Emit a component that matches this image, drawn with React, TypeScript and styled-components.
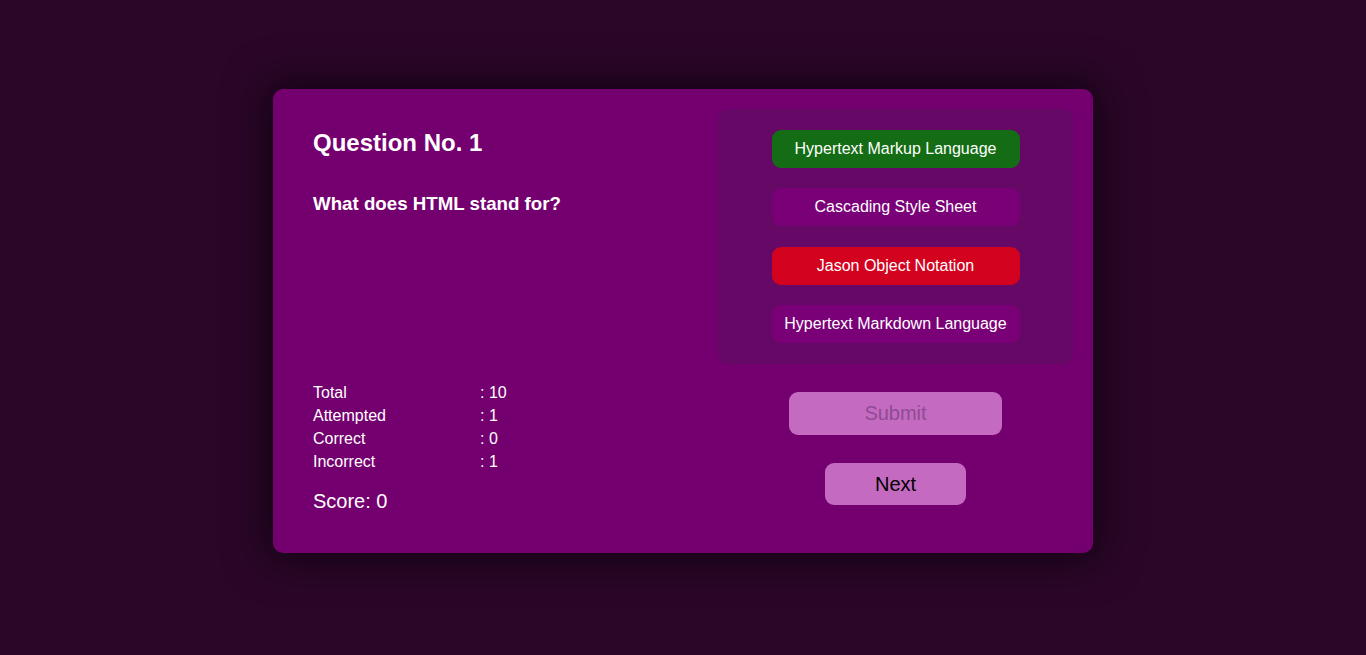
import React from "react";
import styled, { createGlobalStyle } from "styled-components";

const Global = createGlobalStyle`
  html, body { margin: 0; padding: 0; }
  body {
    background: #2b0629;
    font-family: "Liberation Sans", Arial, sans-serif;
    color: #ffffff;
  }
`;

const Page = styled.div`
  height: 655px;
  box-sizing: border-box;
  padding-top: 89px;
  display: flex;
  align-items: flex-start;
  justify-content: center;
`;

const Card = styled.div`
  width: 820px;
  height: 464px;
  box-sizing: border-box;
  padding: 20px;
  background: #740070;
  border-radius: 10px;
  box-shadow: 0 0 40px 8px rgba(0, 0, 0, 0.55);
  display: grid;
  grid-template-columns: 1fr 355px;
`;

const LeftCol = styled.div`
  padding: 20px;
  display: flex;
  flex-direction: column;
  justify-content: space-between;
`;

const Heading = styled.h2`
  margin: 0 0 36px;
  font-size: 24px;
  font-weight: 700;
`;

const QuestionText = styled.h3`
  margin: 0;
  font-size: 18.72px;
  font-weight: 700;
`;

const Stats = styled.div`
  display: grid;
  grid-template-columns: 167px auto;
  font-size: 16px;
  line-height: 23px;
`;

const Score = styled.div`
  margin-top: 17px;
  font-size: 20px;
`;

const RightCol = styled.div`
  display: flex;
  flex-direction: column;
`;

const Options = styled.div`
  height: 255px;
  background: #650866;
  border-radius: 10px;
  display: flex;
  flex-direction: column;
  align-items: center;
  justify-content: space-evenly;
`;

const Option = styled.button<{ $state: "correct" | "wrong" | "idle" }>`
  width: 248px;
  height: 38px;
  border: none;
  border-radius: 9px;
  font-family: "Liberation Sans", Arial, sans-serif;
  font-size: 16px;
  color: #ffffff;
  background: ${(p) =>
    p.$state === "correct" ? "#146d14" : p.$state === "wrong" ? "#d3021f" : "#7a0078"};
  cursor: pointer;
`;

const Actions = styled.div`
  flex: 1;
  display: flex;
  flex-direction: column;
  align-items: center;
  justify-content: space-evenly;
`;

const ActionButton = styled.button<{ $w: number; $h: number; $disabled?: boolean }>`
  width: ${(p) => p.$w}px;
  height: ${(p) => p.$h}px;
  border: none;
  border-radius: 9px;
  background: #c56ac1;
  font-family: "Liberation Sans", Arial, sans-serif;
  font-size: 20px;
  color: ${(p) => (p.$disabled ? "#8d4c93" : "#000000")};
`;

export default function App() {
  const stats: [string, string][] = [
    ["Total", ": 10"],
    ["Attempted", ": 1"],
    ["Correct", ": 0"],
    ["Incorrect", ": 1"],
  ];
  const options: { text: string; state: "correct" | "wrong" | "idle" }[] = [
    { text: "Hypertext Markup Language", state: "correct" },
    { text: "Cascading Style Sheet", state: "idle" },
    { text: "Jason Object Notation", state: "wrong" },
    { text: "Hypertext Markdown Language", state: "idle" },
  ];
  return (
    <>
      <Global />
      <Page>
        <Card>
          <LeftCol>
            <div>
              <Heading>Question No. 1</Heading>
              <QuestionText>What does HTML stand for?</QuestionText>
            </div>
            <div>
              <Stats>
                {stats.map(([k, v]) => (
                  <React.Fragment key={k}>
                    <span>{k}</span>
                    <span>{v}</span>
                  </React.Fragment>
                ))}
              </Stats>
              <Score>Score: 0</Score>
            </div>
          </LeftCol>
          <RightCol>
            <Options>
              {options.map((o) => (
                <Option key={o.text} $state={o.state}>
                  {o.text}
                </Option>
              ))}
            </Options>
            <Actions>
              <ActionButton $w={213} $h={43} $disabled>
                Submit
              </ActionButton>
              <ActionButton $w={141} $h={42}>
                Next
              </ActionButton>
            </Actions>
          </RightCol>
        </Card>
      </Page>
    </>
  );
}
